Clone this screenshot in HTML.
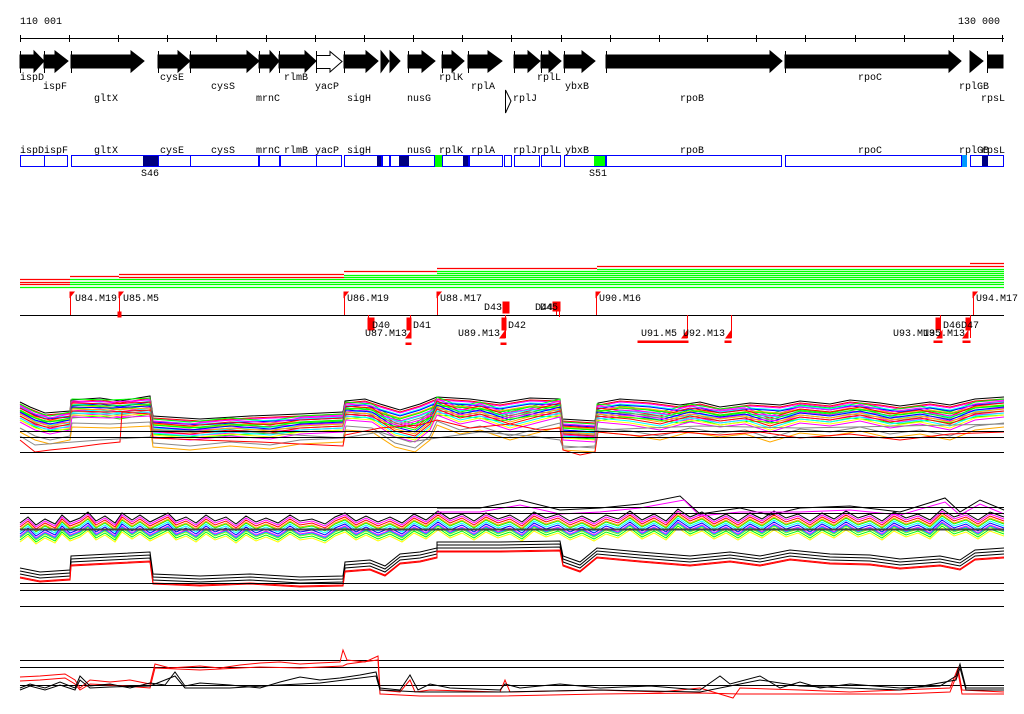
<!DOCTYPE html>
<html><head><meta charset="utf-8"><style>
html,body{margin:0;padding:0;background:#fff;width:1024px;height:714px;overflow:hidden}
svg{display:block}
text{font-family:"Liberation Mono","DejaVu Sans Mono",monospace;font-size:10px;fill:#000}
</style></head><body>
<svg width="1024" height="714" viewBox="0 0 1024 714" xmlns="http://www.w3.org/2000/svg">
<defs>
<path id="p4" d="M20,402 L30,407 L45,413 L70,411 L71,400 L100,398 L120,401 L150,396 L153,416 L200,419 L250,416 L300,414 L343,412 L345,401 L365,399 L380,404 L400,410 L420,404 L437,397 L470,399 L500,403 L530,398 L560,399 L562,419 L595,421 L598,403 L620,399 L650,401 L680,405 L700,402 L720,407 L750,403 L780,405 L800,401 L830,404 L850,400 L880,403 L900,406 L930,402 L950,405 L975,399 L1004,397" fill="none"/>
<path id="p4b" d="M20,410 L35,418 L50,422 L70,418 L72,405 L110,406 L150,404 L153,425 L190,428 L230,424 L270,427 L300,422 L343,420 L346,408 L372,410 L395,425 L415,430 L430,418 L437,403 L460,412 L480,408 L510,418 L540,410 L560,405 L563,428 L595,430 L597,410 L630,413 L660,418 L690,410 L720,415 L745,412 L770,420 L800,411 L830,414 L860,409 L890,416 L920,412 L950,418 L975,408 L1004,405" fill="none"/>
<path id="p5" d="M20,528 L28,522 L36,530 L45,524 L55,529 L62,520 L70,527 L80,523 L88,517 L96,526 L105,521 L115,528 L122,518 L132,525 L140,520 L150,527 L158,523 L168,518 L176,526 L186,522 L196,528 L206,520 L215,526 L226,522 L236,529 L246,521 L256,527 L266,523 L278,528 L290,520 L300,526 L312,524 L325,529 L335,522 L345,518 L356,526 L366,521 L378,527 L390,522 L402,528 L414,519 L426,525 L438,516 L450,524 L462,519 L474,526 L486,518 L498,524 L510,520 L522,527 L534,517 L546,523 L558,519 L570,526 L582,521 L594,527 L606,520 L618,524 L630,516 L642,525 L654,519 L666,526 L678,514 L690,522 L702,517 L714,525 L726,519 L738,526 L750,518 L762,524 L774,516 L786,523 L798,519 L810,526 L822,518 L834,524 L846,516 L858,523 L870,519 L882,526 L894,517 L906,523 L918,519 L930,525 L942,514 L954,522 L966,518 L978,525 L990,517 L1004,522" fill="none"/>
<path id="p5b" d="M20,568 L40,572 L70,570 L71,556 L110,554 L150,552 L153,574 L200,576 L250,574 L300,577 L343,576 L345,562 L370,560 L385,566 L400,554 L420,552 L437,548 L437,542 L500,542 L560,541 L563,556 L580,562 L597,548 L640,552 L690,556 L730,552 L760,556 L790,550 L830,554 L870,555 L900,559 L940,556 L960,560 L975,550 L1004,548" fill="none"/>
</defs>

<text x="20" y="24">110 001</text>
<text x="958" y="24">130 000</text>
<line x1="20" y1="38.5" x2="1004" y2="38.5" stroke="#000"/>
<g stroke="#000">
<line x1="20.5" y1="35" x2="20.5" y2="42"/><line x1="69.5" y1="35" x2="69.5" y2="42"/><line x1="118.5" y1="35" x2="118.5" y2="42"/><line x1="167.5" y1="35" x2="167.5" y2="42"/><line x1="216.5" y1="35" x2="216.5" y2="42"/><line x1="266.5" y1="35" x2="266.5" y2="42"/><line x1="315.5" y1="35" x2="315.5" y2="42"/><line x1="364.5" y1="35" x2="364.5" y2="42"/><line x1="413.5" y1="35" x2="413.5" y2="42"/><line x1="462.5" y1="35" x2="462.5" y2="42"/><line x1="511.5" y1="35" x2="511.5" y2="42"/><line x1="561.5" y1="35" x2="561.5" y2="42"/><line x1="610.5" y1="35" x2="610.5" y2="42"/><line x1="659.5" y1="35" x2="659.5" y2="42"/><line x1="707.5" y1="35" x2="707.5" y2="42"/><line x1="756.5" y1="35" x2="756.5" y2="42"/><line x1="805.5" y1="35" x2="805.5" y2="42"/><line x1="855.5" y1="35" x2="855.5" y2="42"/><line x1="904.5" y1="35" x2="904.5" y2="42"/><line x1="953.5" y1="35" x2="953.5" y2="42"/><line x1="1002.5" y1="35" x2="1002.5" y2="42"/>
</g>

<g fill="#000" stroke="#000" stroke-width="1">
<polygon points="20,55 34,55 34,51 44,61 34,72 34,68 20,68"/>
<polygon points="44,55 55,55 55,51 68,61 55,72 55,68 44,68"/>
<polygon points="71,55 131,55 131,51 144,61 131,72 131,68 71,68"/>
<polygon points="158,55 178,55 178,51 190,61 178,72 178,68 158,68"/>
<polygon points="190,55 247,55 247,51 259,61 247,72 247,68 190,68"/>
<polygon points="259,55 270,55 270,51 279,61 270,72 270,68 259,68"/>
<polygon points="279,55 305,55 305,51 316,61 305,72 305,68 279,68"/>
<polygon points="344,55 366,55 366,51 378,61 366,72 366,68 344,68"/>
<polygon points="381,51 389,61 381,72"/>
<polygon points="390,51 400,61 390,72"/>
<polygon points="408,55 422,55 422,51 435,61 422,72 422,68 408,68"/>
<polygon points="442,55 452,55 452,51 464,61 452,72 452,68 442,68"/>
<polygon points="468,55 488,55 488,51 502,61 488,72 488,68 468,68"/>
<polygon points="514,55 528,55 528,51 540,61 528,72 528,68 514,68"/>
<polygon points="541,55 549,55 549,51 561,61 549,72 549,68 541,68"/>
<polygon points="564,55 582,55 582,51 595,61 582,72 582,68 564,68"/>
<polygon points="606,55 770,55 770,51 782,61 770,72 770,68 606,68"/>
<polygon points="785,55 949,55 949,51 961,61 949,72 949,68 785,68"/>
<polygon points="970,51 983,61 970,72"/>
<rect x="988" y="55" width="15" height="13"/>
</g>
<polygon points="316.5,55.5 330,55.5 330,51.5 342,61.5 330,72 330,68.5 316.5,68.5" fill="#fff" stroke="#000"/>
<polygon points="505.5,90 511,101 505.5,113" fill="#fff" stroke="#000"/>
<g stroke="#000">
<line x1="20.5" y1="51" x2="20.5" y2="73"/><line x1="44.5" y1="51" x2="44.5" y2="73"/><line x1="71.5" y1="51" x2="71.5" y2="73"/><line x1="158.5" y1="51" x2="158.5" y2="73"/><line x1="190.5" y1="51" x2="190.5" y2="73"/><line x1="259.5" y1="51" x2="259.5" y2="73"/><line x1="279.5" y1="51" x2="279.5" y2="73"/><line x1="316.5" y1="51" x2="316.5" y2="73"/><line x1="344.5" y1="51" x2="344.5" y2="73"/><line x1="408.5" y1="51" x2="408.5" y2="73"/><line x1="442.5" y1="51" x2="442.5" y2="73"/><line x1="468.5" y1="51" x2="468.5" y2="73"/><line x1="514.5" y1="51" x2="514.5" y2="73"/><line x1="541.5" y1="51" x2="541.5" y2="73"/><line x1="564.5" y1="51" x2="564.5" y2="73"/><line x1="606.5" y1="51" x2="606.5" y2="73"/><line x1="785.5" y1="51" x2="785.5" y2="73"/><line x1="987.5" y1="51" x2="987.5" y2="73"/>
</g>
<text x="20" y="80">ispD</text><text x="43" y="89">ispF</text><text x="94" y="101">gltX</text>
<text x="160" y="80">cysE</text><text x="211" y="89">cysS</text><text x="256" y="101">mrnC</text>
<text x="284" y="80">rlmB</text><text x="315" y="89">yacP</text><text x="347" y="101">sigH</text>
<text x="407" y="101">nusG</text><text x="439" y="80">rplK</text><text x="471" y="89">rplA</text>
<text x="513" y="101">rplJ</text><text x="537" y="80">rplL</text><text x="565" y="89">ybxB</text>
<text x="680" y="101">rpoB</text><text x="858" y="80">rpoC</text><text x="959" y="89">rplGB</text><text x="981" y="101">rpsL</text>

<text x="20" y="153">ispDispF</text><text x="94" y="153">gltX</text><text x="160" y="153">cysE</text><text x="211" y="153">cysS</text><text x="256" y="153">mrnC</text><text x="284" y="153">rlmB</text><text x="315" y="153">yacP</text><text x="347" y="153">sigH</text><text x="407" y="153">nusG</text><text x="439" y="153">rplK</text><text x="471" y="153">rplA</text><text x="513" y="153">rplJrplL</text><text x="565" y="153">ybxB</text><text x="680" y="153">rpoB</text><text x="858" y="153">rpoC</text><text x="959" y="153">rplGB</text><text x="981" y="153">rpsL</text>
<g fill="#000080"><rect x="143" y="155" width="15" height="12"/><rect x="377" y="155" width="5" height="12"/><rect x="399" y="155" width="10" height="12"/><rect x="463" y="155" width="6" height="12"/><rect x="982" y="155" width="6" height="12"/></g>
<rect x="435" y="155" width="7" height="12" fill="#00ff00"/>
<rect x="594" y="155" width="12" height="12" fill="#00ff00"/>
<rect x="961" y="155" width="6" height="12" fill="#0099ff"/>
<g fill="none" stroke="#0000ff">
<rect x="20.5" y="155.5" width="24" height="11"/><rect x="44.5" y="155.5" width="23" height="11"/><rect x="71.5" y="155.5" width="87" height="11"/><rect x="158.5" y="155.5" width="32" height="11"/><rect x="190.5" y="155.5" width="68" height="11"/><rect x="259.5" y="155.5" width="20" height="11"/><rect x="280.5" y="155.5" width="36" height="11"/><rect x="316.5" y="155.5" width="25" height="11"/><rect x="344.5" y="155.5" width="37" height="11"/><rect x="382.5" y="155.5" width="7" height="11"/><rect x="390.5" y="155.5" width="44" height="11"/><rect x="442.5" y="155.5" width="26" height="11"/><rect x="469.5" y="155.5" width="33" height="11"/><rect x="504.5" y="155.5" width="7" height="11"/><rect x="514.5" y="155.5" width="25" height="11"/><rect x="541.5" y="155.5" width="19" height="11"/><rect x="564.5" y="155.5" width="41" height="11"/><rect x="606.5" y="155.5" width="175" height="11"/><rect x="785.5" y="155.5" width="176" height="11"/><rect x="970.5" y="155.5" width="33" height="11"/>
</g>
<text x="141" y="176">S46</text><text x="589" y="176">S51</text>

<g stroke-width="1.2">
<line x1="970" y1="263.5" x2="1004" y2="263.5" stroke="#f00"/>
<line x1="597" y1="266.5" x2="1004" y2="266.5" stroke="#f00"/>
<line x1="437" y1="268.5" x2="597" y2="268.5" stroke="#f00"/>
<line x1="597" y1="269.5" x2="1004" y2="269.5" stroke="#0f0"/>
<line x1="344" y1="271.5" x2="437" y2="271.5" stroke="#f00"/>
<line x1="437" y1="271.5" x2="1004" y2="271.5" stroke="#0f0"/>
<line x1="437" y1="273.5" x2="1004" y2="273.5" stroke="#0f0"/>
<line x1="119" y1="274.5" x2="344" y2="274.5" stroke="#f00"/>
<line x1="344" y1="275.5" x2="1004" y2="275.5" stroke="#0f0"/>
<line x1="70" y1="276.5" x2="119" y2="276.5" stroke="#f00"/>
<line x1="119" y1="277.5" x2="344" y2="277.5" stroke="#f00"/>
<line x1="344" y1="277.5" x2="1004" y2="277.5" stroke="#0f0"/>
<line x1="20" y1="279.5" x2="70" y2="279.5" stroke="#f00"/>
<line x1="70" y1="279.5" x2="1004" y2="279.5" stroke="#0f0"/>
<line x1="20" y1="282.5" x2="70" y2="282.5" stroke="#f00"/>
<line x1="70" y1="282.5" x2="1004" y2="282.5" stroke="#0f0"/>
<line x1="20" y1="284.5" x2="70" y2="284.5" stroke="#f00"/>
<line x1="70" y1="284.5" x2="1004" y2="284.5" stroke="#0f0"/>
<line x1="20" y1="287.5" x2="1004" y2="287.5" stroke="#0f0"/>
</g>

<line x1="20" y1="315.5" x2="1004" y2="315.5" stroke="#000"/>
<g stroke="#f00" fill="#f00">
<line x1="70.5" y1="292" x2="70.5" y2="315"/><polygon points="70,292 74,292 70,297"/>
<line x1="119.5" y1="292" x2="119.5" y2="315"/><polygon points="119,292 123,292 119,297"/><rect x="118" y="312" width="3" height="5"/>
<line x1="344.5" y1="292" x2="344.5" y2="315"/><polygon points="344,292 348,292 344,297"/>
<line x1="437.5" y1="292" x2="437.5" y2="315"/><polygon points="437,292 441,292 437,297"/>
<line x1="596.5" y1="292" x2="596.5" y2="315"/><polygon points="596,292 600,292 596,297"/>
<line x1="973.5" y1="292" x2="973.5" y2="315"/><polygon points="973,292 977,292 973,297"/>
<rect x="503" y="302" width="6" height="11"/>
<rect x="553" y="302" width="7" height="9"/><line x1="556.5" y1="311" x2="556.5" y2="315"/><line x1="559.5" y1="311" x2="559.5" y2="317"/>
<rect x="368" y="318" width="6" height="12"/><line x1="368.5" y1="315" x2="368.5" y2="330"/>
<rect x="407" y="318" width="4" height="12"/><line x1="410.5" y1="315" x2="410.5" y2="338"/><polygon points="406,338 411,331 411,338"/><rect x="406" y="343" width="5" height="1.5"/>
<rect x="502" y="318" width="4" height="12"/><line x1="505.5" y1="315" x2="505.5" y2="338"/><polygon points="500,338 505,331 505,338"/><rect x="501" y="343" width="5" height="1.5"/>
<line x1="687.5" y1="315" x2="687.5" y2="338"/><polygon points="682,338 687,331 687,338"/><rect x="638" y="341" width="50" height="1.5"/>
<line x1="731.5" y1="315" x2="731.5" y2="338"/><polygon points="726,338 731,331 731,338"/><rect x="725" y="341" width="6" height="1.5"/>
<line x1="940.5" y1="315" x2="940.5" y2="338"/><rect x="936" y="318" width="4" height="12"/><polygon points="937,338 942,331 942,338"/><rect x="934" y="341" width="8" height="1.5"/>
<line x1="970.5" y1="315" x2="970.5" y2="338"/><rect x="966" y="318" width="4" height="12"/><polygon points="963,338 968,331 968,338"/><rect x="963" y="341" width="7" height="1.5"/>
</g>
<text x="75" y="301">U84.M19</text><text x="123" y="301">U85.M5</text><text x="347" y="301">U86.M19</text><text x="440" y="301">U88.M17</text><text x="599" y="301">U90.M16</text><text x="976" y="301">U94.M17</text>
<text x="484" y="310">D43</text><text x="535" y="310">D44</text><text x="540" y="310">D45</text>
<text x="372" y="328">D40</text><text x="413" y="328">D41</text><text x="508" y="328">D42</text><text x="943" y="328">D46</text><text x="961" y="328">D47</text>
<text x="365" y="336">U87.M13</text><text x="458" y="336">U89.M13</text><text x="641" y="336">U91.M5</text><text x="683" y="336">U92.M13</text><text x="893" y="336">U93.M13</text><text x="923" y="336">U95.M13</text>

<g fill="none" stroke-width="1">
<use href="#p4" stroke="#000"/>
<use href="#p4" stroke="#f00" transform="translate(0,2)"/>
<use href="#p4" stroke="#f0f" transform="translate(0,3)"/>
<use href="#p4b" stroke="#0f0" transform="translate(0,-6)"/>
<use href="#p4" stroke="#0ff" transform="translate(0,5)"/>
<use href="#p4" stroke="#00f" transform="translate(0,6)"/>
<use href="#p4b" stroke="#f0f" transform="translate(0,-4)"/>
<use href="#p4" stroke="#fa0" transform="translate(0,8)"/>
<use href="#p4" stroke="#0f0" transform="translate(0,9)"/>
<use href="#p4b" stroke="#f00" transform="translate(0,-2)"/>
<use href="#p4" stroke="#f0f" transform="translate(0,11)"/>
<use href="#p4" stroke="#0ff" transform="translate(0,12)"/>
<use href="#p4b" stroke="#0f0" transform="translate(0,0)"/>
<use href="#p4" stroke="#888" transform="translate(0,14)"/>
<use href="#p4b" stroke="#00f" transform="translate(0,2)"/>
<use href="#p4" stroke="#f0f" transform="translate(0,16)"/>
<use href="#p4b" stroke="#fa0" transform="translate(0,4)"/>
<use href="#p4" stroke="#0f0" transform="translate(0,18)"/>
<use href="#p4b" stroke="#f00" transform="translate(0,6)"/>
<use href="#p4b" stroke="#0ff" transform="translate(0,8)"/>
<use href="#p4b" stroke="#ff0" transform="translate(0,10)"/>
<use href="#p4b" stroke="#f0f" transform="translate(0,12)"/>
<use href="#p4b" stroke="#888" transform="translate(0,18)"/>
<use href="#p4b" stroke="#fa0" transform="translate(0,22)"/>
<path d="M20,440 L35,452 L50,450 L70,448 L100,444 L120,442 L122,412 L150,414 L153,438 L200,440 L260,442 L300,444 L343,446 L345,435 L380,428 L420,425 L437,420 L470,428 L510,424 L540,430 L560,428 L563,450 L580,455 L595,452 L598,432 L640,436 L680,432 L720,435 L760,432 L800,438 L850,434 L900,440 L950,434 L1004,432" stroke="#f00"/>
<path d="M20,436 L35,445 L60,443 L100,440 L150,437 L153,430 L250,432 L343,438 L380,432 L410,442 L437,438 L480,432 L530,436 L560,440 L563,448 L595,446 L598,430 L700,426 L800,428 L900,426 L1004,424" stroke="#888"/>
</g>
<g stroke="#000"><line x1="20" y1="431.5" x2="1004" y2="431.5"/><line x1="20" y1="437.5" x2="1004" y2="437.5"/><line x1="20" y1="452.5" x2="1004" y2="452.5"/></g>

<g fill="none">
<use href="#p5" stroke="#000" transform="translate(0,-5)"/>
<use href="#p5" stroke="#f0f" transform="translate(0,-3)"/>
<use href="#p5" stroke="#f00" transform="translate(0,-1)"/>
<use href="#p5" stroke="#0f0" transform="translate(0,2)"/>
<use href="#p5" stroke="#0ff" transform="translate(0,4)"/>
<use href="#p5" stroke="#00f" transform="translate(0,6)"/>
<use href="#p5" stroke="#fa0" transform="translate(0,1)"/>
<use href="#p5" stroke="#f0f" transform="translate(0,8)"/>
<use href="#p5" stroke="#8f0" transform="translate(0,10)"/>
<use href="#p5" stroke="#0f0" transform="translate(0,12)"/>
<use href="#p5" stroke="#0af" transform="translate(0,9)"/>
<use href="#p5" stroke="#ff0" transform="translate(0,14)"/>
<path d="M437,508 L480,508 L520,500 L560,510 L600,508 L640,504 L680,496 L700,514 L740,508 L770,515 L800,508 L850,506 L900,512 L945,498 L960,512 L980,500 L1004,510" stroke="#000"/>
<path d="M437,512 L480,512 L520,505 L560,514 L600,512 L640,508 L684,500 L700,516 L740,512 L800,512 L850,510 L900,515 L945,502 L960,515 L980,504 L1004,514" stroke="#f0f"/>
<use href="#p5b" stroke="#000"/>
<use href="#p5b" stroke="#000" transform="translate(0,3)"/>
<use href="#p5b" stroke="#000" transform="translate(0,6)"/>
<use href="#p5b" stroke="#f00" transform="translate(0,9)"/>
<use href="#p5b" stroke="#f00" transform="translate(0,10)"/>
</g>
<g stroke="#000"><line x1="20" y1="507.5" x2="1004" y2="507.5"/><line x1="20" y1="513.5" x2="1004" y2="513.5"/><line x1="20" y1="529.5" x2="1004" y2="529.5" stroke-width="2" stroke="#444"/><line x1="20" y1="583.5" x2="1004" y2="583.5"/><line x1="20" y1="590.5" x2="1004" y2="590.5"/><line x1="20" y1="606.5" x2="1004" y2="606.5"/></g>

<g stroke="#000"><line x1="20" y1="660.5" x2="1004" y2="660.5"/><line x1="20" y1="667.5" x2="1004" y2="667.5"/><line x1="20" y1="685.5" x2="1004" y2="685.5"/></g>
<g fill="none">
<path d="M20,677 L40,676 L65,674 L75,680 L80,688 L90,680 L110,682 L130,680 L150,684 L155,664 L170,668 L200,666 L220,668 L240,665 L260,663 L280,662 L300,664 L318,663 L340,662 L343,650 L347,660 L365,662 L378,656 L380,690 L400,692 L410,680 L415,692 L430,690 L500,692 L505,680 L510,692 L600,690 L660,692 L700,688 L733,698 L740,688 L800,690 L850,692 L900,690 L950,688 L958,668 L962,690 L1004,692" stroke="#f00"/>
<path d="M20,681 L40,680 L65,678 L75,684 L80,690 L90,684 L110,685 L150,688 L155,668 L200,670 L260,667 L300,668 L343,666 L347,664 L378,660 L380,694 L420,696 L500,696 L600,694 L700,693 L740,694 L800,694 L900,694 L950,692 L958,672 L962,694 L1004,694" stroke="#f00"/>
<path d="M20,688 L30,684 L45,688 L60,682 L75,688 L80,676 L90,686 L110,684 L130,688 L150,683 L165,685 L175,672 L185,686 L200,683 L230,685 L260,688 L280,682 L300,677 L320,680 L340,678 L360,675 L376,672 L380,688 L400,690 L410,675 L418,690 L430,684 L450,688 L500,690 L505,684 L520,688 L560,684 L600,688 L650,686 L700,690 L720,676 L730,684 L760,676 L780,688 L800,682 L820,688 L850,684 L900,688 L940,686 L956,676 L960,664 L966,688 L1004,688" stroke="#000"/>
<path d="M20,690 L30,686 L45,690 L60,685 L75,690 L80,680 L90,688 L110,687 L150,686 L175,676 L185,688 L230,688 L280,685 L320,683 L376,676 L380,690 L420,692 L500,692 L600,690 L700,692 L760,680 L800,686 L900,690 L956,680 L960,668 L966,690 L1004,690" stroke="#000"/>
</g>
</svg>
</body></html>
